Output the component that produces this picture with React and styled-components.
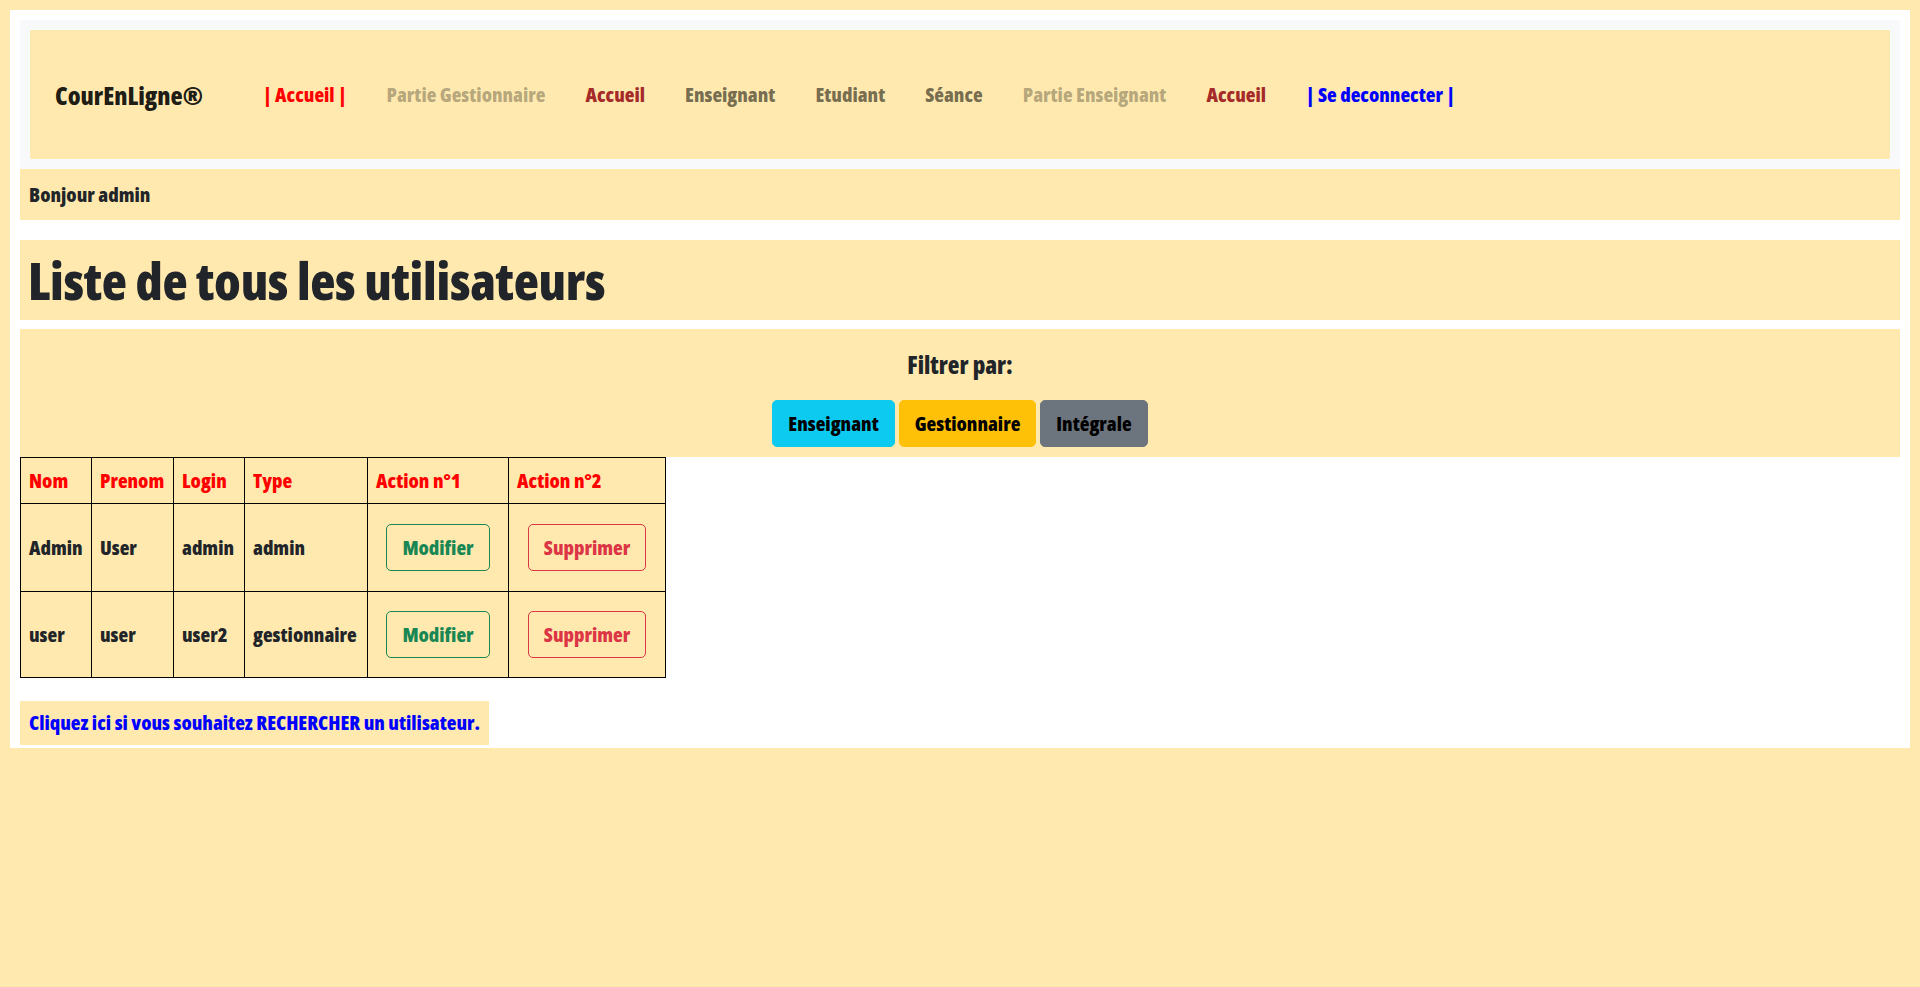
import React from "react";
import styled, { createGlobalStyle } from "styled-components";

const cream = "#ffe9ae";

const GlobalStyle = createGlobalStyle`
  html, body {
    background: ${cream};
  }
  body {
    margin: 0;
    padding: 10px;
    font-family: "Open Sans", "Roboto", "DejaVu Sans", sans-serif;
    font-stretch: 75%;
    font-weight: 800;
    color: #212529;
  }
  * { box-sizing: border-box; }
`;

const Page = styled.div`
  background: #ffffff;
  padding: 10px 10px 3px;
`;

const NavOuter = styled.nav`
  background: #f8f9fa;
  padding: 10px;
`;

const NavInner = styled.div`
  background: ${cream};
  height: 129px;
  display: flex;
  align-items: center;
  padding: 0 25px;
`;

const Brand = styled.a`
  font-size: 25px;
  color: rgba(0, 0, 0, 0.9);
  text-decoration: none;
  margin-right: 60px;
  white-space: nowrap;
`;

const NavList = styled.ul`
  display: flex;
  gap: 40px;
  list-style: none;
  margin: 0;
  padding: 0;
`;

const NavLink = styled.a`
  font-size: 20px;
  color: ${p => p.$color};
  text-decoration: none;
  white-space: nowrap;
`;

const Greeting = styled.div`
  background: ${cream};
  padding: 10px 9px;
  line-height: 31px;
  font-size: 20px;
  margin-bottom: 20px;
`;

const TitleBar = styled.div`
  background: ${cream};
  height: 80px;
  display: flex;
  align-items: center;
  padding: 0 8px;
  margin-bottom: 9px;
`;

const Title = styled.h1`
  margin: 0;
  font-size: 52px;
  font-weight: 800;
  line-height: 1;
  letter-spacing: -0.3px;
  color: #212529;
`;

const FilterPanel = styled.div`
  background: ${cream};
  height: 128px;
  padding-top: 22px;
  display: flex;
  flex-direction: column;
  align-items: center;
`;

const FilterLabel = styled.div`
  font-size: 24px;
  line-height: 28px;
`;

const ButtonRow = styled.div`
  margin-top: 21px;
  display: flex;
  gap: 4px;
`;

const FilterButton = styled.button`
  font: inherit;
  font-size: 20px;
  height: 47px;
  padding: 0 15px;
  border-radius: 5px;
  border: 1px solid ${p => p.$bg};
  background: ${p => p.$bg};
  color: #000;
  cursor: pointer;
`;

const Table = styled.table`
  border-collapse: collapse;
  table-layout: fixed;
  width: 645px;
  background: ${cream};
  font-size: 20px;
`;

const Th = styled.th`
  border: 1px solid #000;
  color: #ff0000;
  text-align: left;
  font-weight: 800;
  height: 46px;
  padding: 0 8px;
  width: ${p => p.$w}px;
  white-space: nowrap;
`;

const Td = styled.td`
  border: 1px solid #000;
  padding: 8px;
  height: ${p => p.$h}px;
  text-align: ${p => (p.$center ? "center" : "left")};
  white-space: nowrap;
`;

const OutlineButton = styled.button`
  font: inherit;
  font-size: 20px;
  height: 47px;
  padding: 0 15px;
  border-radius: 5px;
  background: transparent;
  border: 1px solid ${p => p.$color};
  color: ${p => p.$color};
  cursor: pointer;
`;

const SearchLink = styled.a`
  display: inline-block;
  margin-top: 23px;
  background: ${cream};
  color: #0000ff;
  text-decoration: none;
  font-size: 20px;
  line-height: 44px;
  padding: 0 9px;
`;

const navItems = [
  ["| Accueil |", "#ff0000"],
  ["Partie Gestionnaire", "rgba(0,0,0,0.3)"],
  ["Accueil", "#a52a2a"],
  ["Enseignant", "rgba(0,0,0,0.55)"],
  ["Etudiant", "rgba(0,0,0,0.55)"],
  ["Séance", "rgba(0,0,0,0.55)"],
  ["Partie Enseignant", "rgba(0,0,0,0.3)"],
  ["Accueil", "#a52a2a"],
  ["| Se deconnecter |", "#0000ff"],
];

const columns = [
  ["Nom", 71],
  ["Prenom", 82],
  ["Login", 71],
  ["Type", 123],
  ["Action n°1", 141],
  ["Action n°2", 157],
];

const users = [
  { nom: "Admin", prenom: "User", login: "admin", type: "admin", h: 88 },
  { nom: "user", prenom: "user", login: "user2", type: "gestionnaire", h: 86 },
];

export default function App() {
  return (
    <>
      <GlobalStyle />
      <Page>
        <NavOuter>
          <NavInner>
            <Brand href="#">CourEnLigne®</Brand>
            <NavList>
              {navItems.map(([label, color], i) => (
                <li key={i}>
                  <NavLink href="#" $color={color}>{label}</NavLink>
                </li>
              ))}
            </NavList>
          </NavInner>
        </NavOuter>
        <Greeting>Bonjour admin</Greeting>
        <TitleBar>
          <Title>Liste de tous les utilisateurs</Title>
        </TitleBar>
        <FilterPanel>
          <FilterLabel>Filtrer par:</FilterLabel>
          <ButtonRow>
            <FilterButton $bg="#0dcaf0">Enseignant</FilterButton>
            <FilterButton $bg="#ffc107">Gestionnaire</FilterButton>
            <FilterButton $bg="#6c757d">Intégrale</FilterButton>
          </ButtonRow>
        </FilterPanel>
        <Table>
          <thead>
            <tr>
              {columns.map(([c, w]) => (
                <Th key={c} $w={w}>{c}</Th>
              ))}
            </tr>
          </thead>
          <tbody>
            {users.map(u => (
              <tr key={u.login}>
                <Td $h={u.h}>{u.nom}</Td>
                <Td $h={u.h}>{u.prenom}</Td>
                <Td $h={u.h}>{u.login}</Td>
                <Td $h={u.h}>{u.type}</Td>
                <Td $h={u.h} $center>
                  <OutlineButton $color="#198754">Modifier</OutlineButton>
                </Td>
                <Td $h={u.h} $center>
                  <OutlineButton $color="#dc3545">Supprimer</OutlineButton>
                </Td>
              </tr>
            ))}
          </tbody>
        </Table>
        <div>
          <SearchLink href="#">Cliquez ici si vous souhaitez RECHERCHER un utilisateur.</SearchLink>
        </div>
      </Page>
    </>
  );
}
